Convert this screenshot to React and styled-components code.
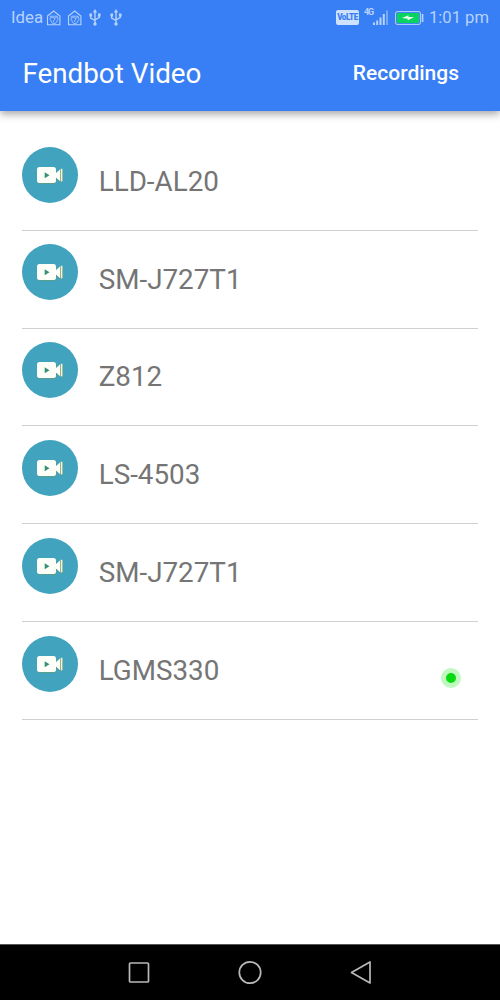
import styled, { createGlobalStyle } from "styled-components";

const GlobalStyle = createGlobalStyle`
  * {
    box-sizing: border-box;
  }
  body {
    margin: 0;
    background: #fff;
    font-family: Roboto, "Liberation Sans", sans-serif;
  }
`;

const Screen = styled.div`
  display: flex;
  flex-direction: column;
  width: 500px;
  height: 1000px;
  overflow: hidden;
  background: #fff;
`;

const Header = styled.header`
  height: 111px;
  flex: none;
  background: #387ef5;
  box-shadow: 0 3px 8px rgba(0, 0, 0, 0.36);
`;

const StatusBar = styled.div`
  display: flex;
  justify-content: space-between;
  height: 35px;
  padding: 0 11px;
  color: #b5d3fd;
  font-size: 17px;
  line-height: 35px;
`;

const StatusGroup = styled.div`
  display: flex;
  align-items: center;
  svg {
    display: block;
    flex: none;
  }
`;

const Carrier = styled.span`
  width: 35px;
  font-size: 16.8px;
`;

const Clock = styled.span`
  width: 60px;
  font-size: 16.6px;
  white-space: nowrap;
`;

const Volte = styled.span`
  width: 23px;
  height: 15px;
  margin-right: 5px;
  border-radius: 2px;
  background: #cfe2fd;
  color: #387ef5;
  font-size: 8.2px;
  font-weight: 900;
  line-height: 15.5px;
  letter-spacing: -0.5px;
  text-align: center;
`;

const Signal = styled.div`
  display: flex;
  width: 25px;
  height: 18px;
  margin-right: 6px;
`;

const Network = styled.span`
  width: 9px;
  font-size: 9px;
  font-weight: 700;
  line-height: 6px;
  letter-spacing: -1.2px;
`;

const Toolbar = styled.div`
  display: flex;
  align-items: center;
  justify-content: space-between;
  height: 76px;
  padding: 0 41px 0 22.4px;
  color: #fff;
`;

const Title = styled.h1`
  margin: 0;
  padding-top: 1px;
  font-size: 27.8px;
  font-weight: 400;
  line-height: 76px;
`;

const Recordings = styled.button`
  padding: 0;
  border: 0;
  background: none;
  color: #fff;
  font-family: inherit;
  font-size: 21px;
  font-weight: 500;
`;

const List = styled.ul`
  flex: 1;
  margin: 0;
  padding: 22.1px 22px 0;
  list-style: none;
`;

const Row = styled.li`
  display: flex;
  height: 97.78px;
  padding-top: 13.6px;
  border-bottom: 1px solid #d0d0d0;
`;

const Avatar = styled.div`
  display: flex;
  align-items: center;
  justify-content: center;
  width: 56px;
  height: 56px;
  border-radius: 50%;
  background: #41a3be;
`;

const Name = styled.span`
  flex: 1;
  margin: 15.2px 0 0 20.7px;
  color: #757575;
  font-size: 27.8px;
  line-height: 40px;
`;

const OnlineDot = styled.span`
  width: 20px;
  height: 20px;
  margin: 32px 17.5px 0 0;
  border: 5px solid #c0f9c0;
  border-radius: 50%;
  background: #07db10;
`;

const NavBar = styled.nav`
  display: flex;
  justify-content: center;
  gap: 83px;
  flex: none;
  height: 56px;
  padding-top: 14px;
  border-top: 1px solid #555;
  background: #000;
`;

const devices = [
  { name: "LLD-AL20" },
  { name: "SM-J727T1" },
  { name: "Z812" },
  { name: "LS-4503" },
  { name: "SM-J727T1" },
  { name: "LGMS330", online: true },
];

const HouseIcon = () => (
  <svg width="21" height="16" viewBox="0 0 21 16" fill="none" stroke="#b5d3fd">
    <path d="M1.5 6 7.7 1l6.2 5v8.8H1.5z" strokeWidth="1.1" />
    <path d="M4.6 6.2h6.5l1 3-2.6 4.2H6.4L4 9.2zM5 7l4 1.2 2-1.5M9 8.2 7.2 12" strokeWidth="0.8" />
  </svg>
);

const UsbIcon = () => (
  <svg width="21" height="17" viewBox="0 0 21 17" fill="none" stroke="#b5d3fd" strokeWidth="1.4">
    <path d="M7 3v11M2.7 6.5v2.5L7 11.5M11.3 6v2.4L7 11" />
    <path d="M7 0 9.2 3.5H4.8zM1.4 4.6h2.7v2.8H1.4zM9.9 4.6h2.7v2.8H9.9z" fill="#b5d3fd" stroke="none" />
    <circle cx="7" cy="15" r="1.7" fill="#b5d3fd" stroke="none" />
  </svg>
);

const SignalBars = () => (
  <svg width="16" height="18" viewBox="0 0 16 18" fill="#b5d3fd">
    <path d="M0 13.5h2V16H0zM3.2 11.5h2V16h-2zM6.5 8.5h2V16h-2zM9.8 5h2v11h-2z" />
    <path d="M13 1.5h2V16h-2z" opacity=".5" />
  </svg>
);

const BatteryIcon = () => (
  <svg width="34" height="14" viewBox="0 0 34 14">
    <rect x=".6" y=".6" width="24.8" height="12.8" rx="1.5" fill="none" stroke="#b5d3fd" />
    <rect x="2" y="2" width="22" height="10" fill="#08d45d" />
    <path d="m7 7 6.5-2.8v1.9H19l-6.3 3.4V7.7z" fill="#e9fff1" />
    <rect x="26.7" y="3" width="1.7" height="8" fill="#b5d3fd" />
  </svg>
);

const CameraIcon = () => (
  <svg width="28" height="18" viewBox="0 0 28 18">
    <rect x="1.4" y="1.6" width="19" height="16.3" rx="2.5" fill="#73975a" opacity=".5" />
    <path d="m19.5 8.2 5.5-5h2v12.9h-2l-5.5-4z" fill="#52713a" opacity=".55" />
    <rect x="1" y="1" width="19" height="16" rx="2.5" fill="#fffffa" />
    <path d="M19.5 7.5 24 3.5v11.8l-4.5-4z" fill="#fffffa" />
    <path d="M24.6 2.8h1.9v12.7h-1.9z" fill="#f6f5cf" />
    <path d="m8.7 6.2 4.8 3-4.8 3z" fill="#378f76" />
  </svg>
);

const App = () => {
  return (
    <Screen>
      <GlobalStyle />
      <Header>
        <StatusBar>
          <StatusGroup>
            <Carrier>Idea</Carrier>
            <HouseIcon />
            <HouseIcon />
            <UsbIcon />
            <UsbIcon />
          </StatusGroup>
          <StatusGroup>
            <Volte>VoLTE</Volte>
            <Signal>
              <Network>4G</Network>
              <SignalBars />
            </Signal>
            <BatteryIcon />
            <Clock>1:01 pm</Clock>
          </StatusGroup>
        </StatusBar>
        <Toolbar>
          <Title>Fendbot Video</Title>
          <Recordings>Recordings</Recordings>
        </Toolbar>
      </Header>

      <List>
        {devices.map((device, index) => (
          <Row key={index}>
            <Avatar>
              <CameraIcon />
            </Avatar>
            <Name>{device.name}</Name>
            {device.online && <OnlineDot />}
          </Row>
        ))}
      </List>

      <NavBar>
        {/* recents, home, back */}
        <svg width="28" height="28" viewBox="0 0 28 28" fill="none" stroke="#b9b9b9" strokeWidth="1.7">
          <rect x="4.5" y="4" width="19" height="19" rx="1" />
        </svg>
        <svg width="28" height="28" viewBox="0 0 28 28" fill="none" stroke="#b9b9b9" strokeWidth="1.7">
          <circle cx="14" cy="13.5" r="10.7" />
        </svg>
        <svg width="28" height="28" viewBox="0 0 28 28" fill="none" stroke="#b9b9b9" strokeWidth="1.7" strokeLinejoin="round">
          <path d="M23 3v21L4.5 13.5z" />
        </svg>
      </NavBar>
    </Screen>
  );
};

export default App;
